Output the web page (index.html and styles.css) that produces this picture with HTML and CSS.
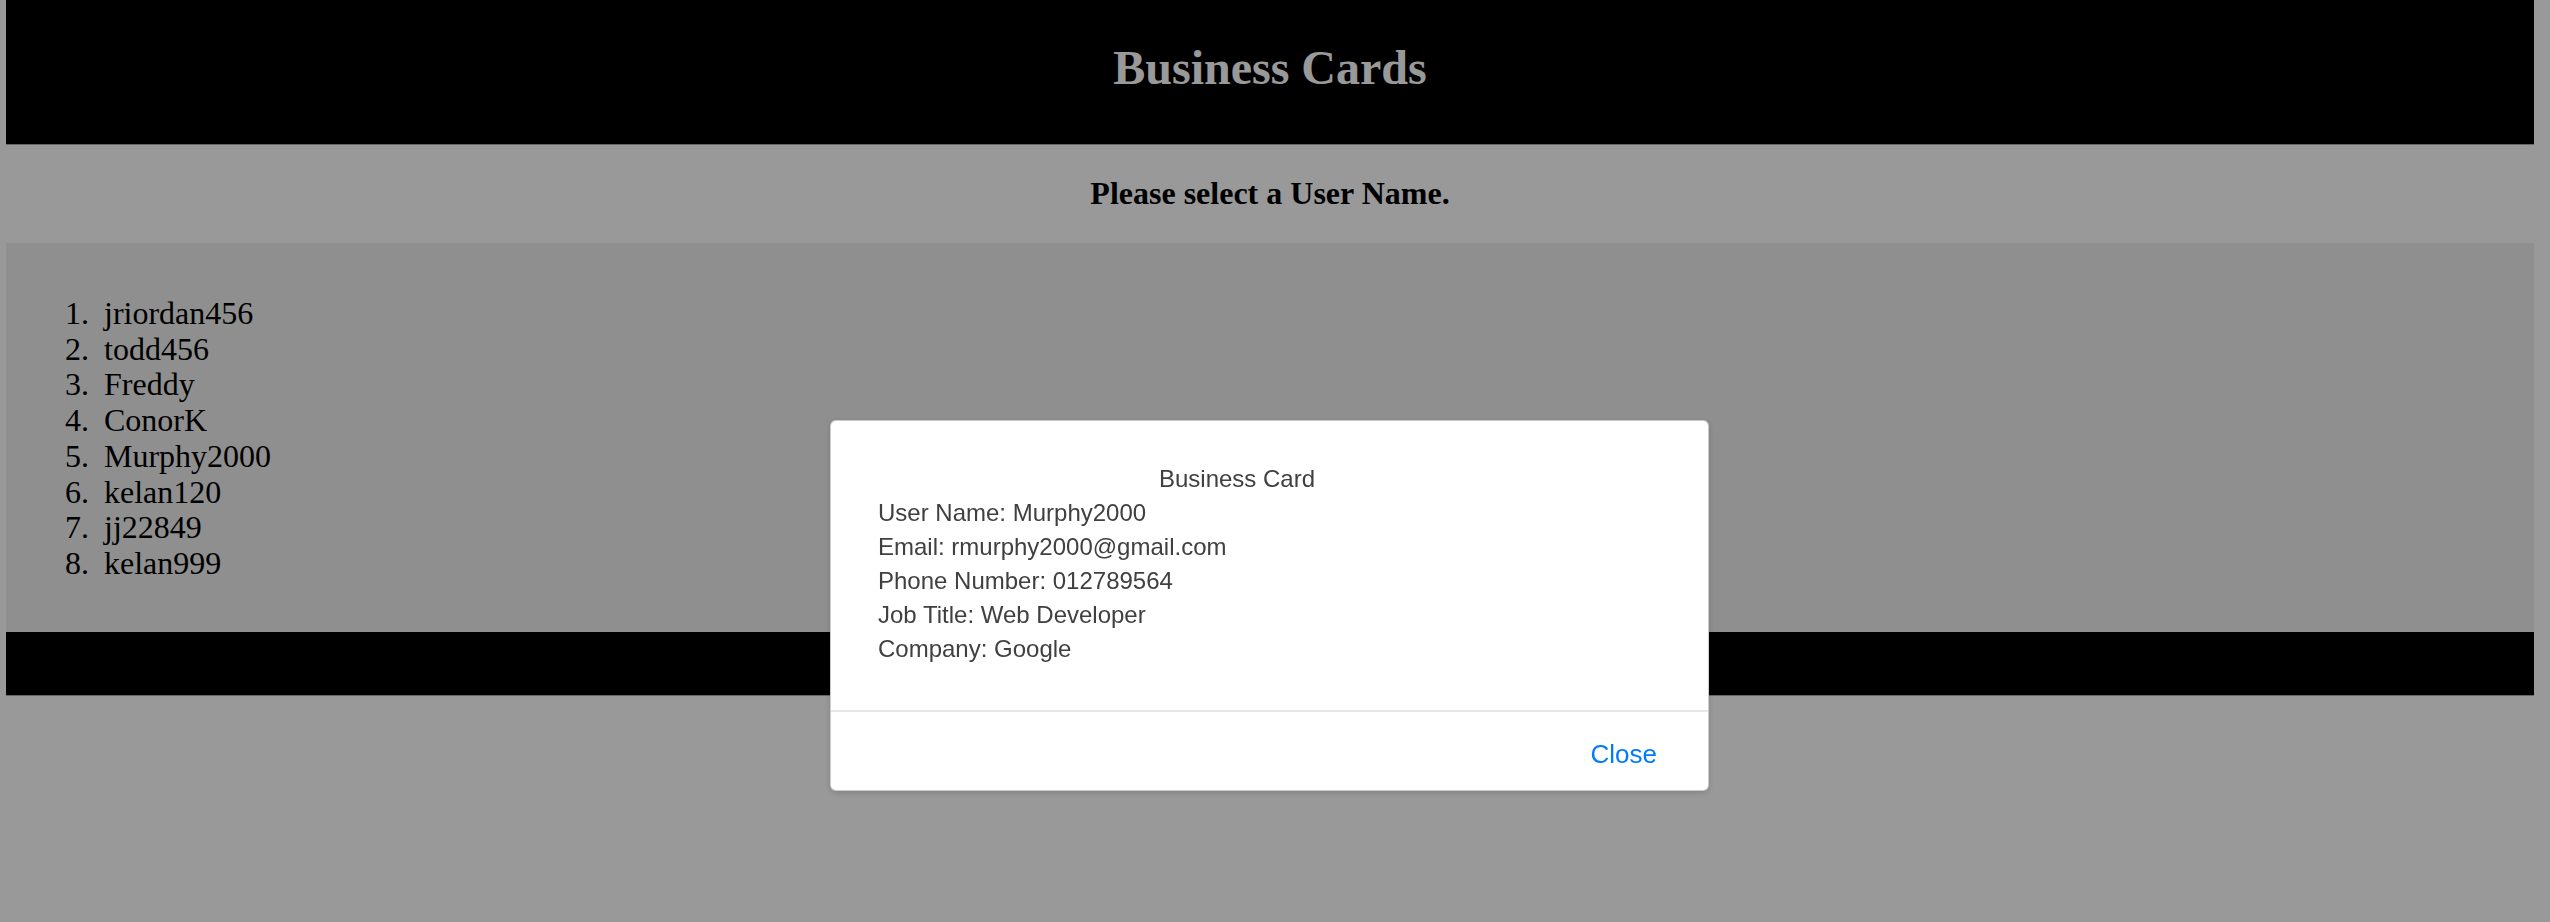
FILE: index.html
```html
<!DOCTYPE html>
<html lang="en">
<head>
<meta charset="utf-8">
<title>Business Cards</title>
<link rel="stylesheet" href="styles.css">
</head>
<body>
<header class="site-header">
  <h1 class="site-title">Business Cards</h1>
</header>
<h2 class="prompt">Please select a User Name.</h2>
<section class="users">
  <ol class="user-list">
    <li>jriordan456</li>
    <li>todd456</li>
    <li>Freddy</li>
    <li>ConorK</li>
    <li>Murphy2000</li>
    <li>kelan120</li>
    <li>jj22849</li>
    <li>kelan999</li>
  </ol>
</section>
<footer class="site-footer"></footer>

<div class="backdrop"></div>
<div class="modal" role="dialog" aria-label="Business Card">
  <div class="modal-body">
    <div class="card-title">Business Card</div>
    <div class="card-line">User Name: Murphy2000</div>
    <div class="card-line">Email: rmurphy2000@gmail.com</div>
    <div class="card-line">Phone Number: 012789564</div>
    <div class="card-line">Job Title: Web Developer</div>
    <div class="card-line">Company: Google</div>
  </div>
  <div class="modal-footer">
    <button class="btn-close" type="button">Close</button>
  </div>
</div>
</body>
</html>
```

FILE: styles.css
```css
html {
  background: #ffffff;
}

body {
  margin: 0 16px 0 6px;
  min-height: 922px;
  font-family: "Liberation Serif", "Times New Roman", serif;
  color: #000;
}

.site-header {
  background: #000;
  border-bottom: 1px solid #aaaaaa;
  padding: 40px 0 49px;
}

.site-title {
  margin: 0;
  text-align: center;
  color: #ffffff;
  font-size: 48px;
  line-height: 55px;
  font-weight: bold;
}

.prompt {
  margin: 0;
  padding: 30px 0 31px;
  text-align: center;
  font-size: 32px;
  line-height: 37px;
  font-weight: bold;
}

.users {
  background: #eeeeee;
  margin-right: -16px;
  padding: 53px 0 50px 59px;
}

.user-list {
  list-style: none;
  counter-reset: item;
  margin: 0;
  padding: 0;
  font-size: 32px;
  line-height: 35.7px;
}

.user-list li {
  counter-increment: item;
}

.user-list li::before {
  content: counter(item) ".";
  display: inline-block;
  width: 39px;
}

.site-footer {
  background: #000;
  height: 63px;
  border-bottom: 1px solid #aaaaaa;
}

.backdrop {
  position: fixed;
  inset: 0;
  background: rgba(0, 0, 0, 0.4);
}

.modal {
  position: fixed;
  top: 420px;
  left: 830px;
  width: 879px;
  box-sizing: border-box;
  background: #fff;
  border: 1px solid rgba(0, 0, 0, 0.2);
  border-radius: 6px;
  box-shadow: 0 2px 6px rgba(0, 0, 0, 0.15);
  font-family: "Liberation Sans", Arial, Helvetica, sans-serif;
  color: #404040;
}

.modal-body {
  padding: 41px 112px 44px 47px;
  font-size: 24px;
  line-height: 34px;
}

.card-title {
  text-align: center;
}

.modal-footer {
  border-top: 2px solid #e7e7e7;
  padding: 23px 32px 16px 0;
  display: flex;
  justify-content: flex-end;
}

.btn-close {
  background: none;
  border: 0;
  padding: 0 19px;
  margin: 0;
  font-family: "Liberation Sans", Arial, Helvetica, sans-serif;
  font-size: 26px;
  line-height: 39px;
  color: #007bff;
  cursor: pointer;
}
```
